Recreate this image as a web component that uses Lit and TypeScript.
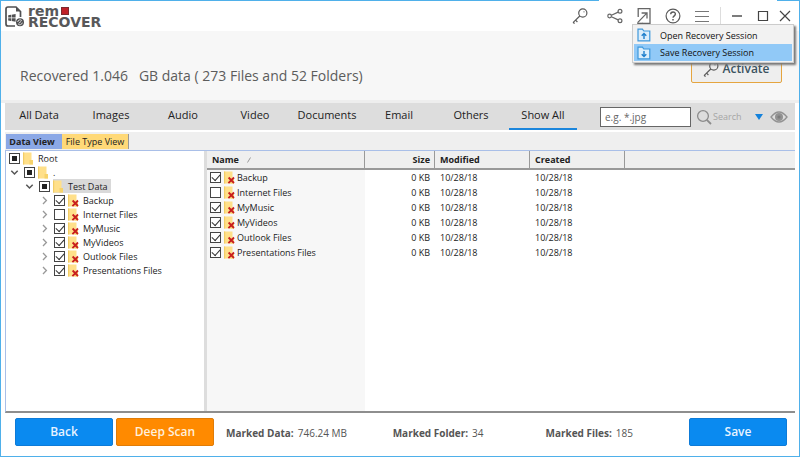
import { LitElement, html, css, svg, nothing } from "lit";
import { customElement, state } from "lit/decorators.js";
import { classMap } from "lit/directives/class-map.js";

interface Entry {
  name: string;
  checked: boolean;
}

const filters = ["All Data", "Images", "Audio", "Video", "Documents", "Email", "Others", "Show All"];

const entries: Entry[] = [
  { name: "Backup", checked: true },
  { name: "Internet Files", checked: false },
  { name: "MyMusic", checked: true },
  { name: "MyVideos", checked: true },
  { name: "Outlook Files", checked: true },
  { name: "Presentations Files", checked: true },
];

const stats = [
  { label: "Marked Data:", value: "746.24 MB" },
  { label: "Marked Folder:", value: "34" },
  { label: "Marked Files:", value: "185" },
];

const folder = (deleted = false) => html`<svg class="folder" width="11" height="13" viewBox="0 0 11 13" aria-hidden="true">
  <path d="M0 0.5H8.5V8H10V12.5H0z" fill="#ffe08a" />
  <path d="M0 0.5H1.2V12.5H0z" fill="#f2cd66" />
  <path d="M6.5 8H10V12.5H6.5z" fill="#f7d36a" />
  ${deleted ? svg`<path d="M4.6 6.5 10 12M10 6.5 4.4 12.2" stroke="#c81e1e" stroke-width="1.8" fill="none" />` : nothing}
</svg>`;

const chevron = (open: boolean) => html`<svg class="chevron" width="9" height="9" viewBox="0 0 9 9" fill="none" aria-hidden="true">
  ${open
    ? svg`<path d="M1.3 2.8 4.5 6 7.7 2.8" stroke="#555" stroke-width="1.5" />`
    : svg`<path d="M3 1 6.4 4.5 3 8" stroke="#999" stroke-width="1.3" />`}
</svg>`;

const keyIcon = html`<svg width="16" height="16" viewBox="0 0 16 16" fill="none" stroke="#5a5a5a" stroke-width="1.2" aria-hidden="true">
  <circle cx="10.8" cy="5" r="4.1" />
  <path d="M7.8 8 1 14.6M3.6 12.2 5.4 14M1.2 14.4 2.6 15.4" />
  <circle cx="12" cy="3.8" r="0.6" fill="#555" stroke="none" />
</svg>`;

const shareIcon = html`<svg width="16" height="16" viewBox="0 0 16 16" fill="none" stroke="#666" stroke-width="1.2" aria-hidden="true">
  <circle cx="2.6" cy="8" r="1.8" /><circle cx="13" cy="3.2" r="1.9" /><circle cx="13" cy="12.8" r="1.9" />
  <path d="M4.4 7.2 11.2 4.1M4.4 8.8 11.2 11.9" />
</svg>`;

const exportIcon = html`<svg width="16" height="18" viewBox="0 0 16 18" fill="none" stroke="#666" aria-hidden="true">
  <path d="M2.2 10V1.6H14V16.4H6.5" stroke-width="1.3" />
  <path d="M1.6 15.6 10.6 6.4M5.6 6H11V11.4" stroke-width="1.3" />
  <path d="M1.2 16.4H7" stroke-width="1.4" />
</svg>`;

const helpIcon = html`<svg width="16" height="16" viewBox="0 0 16 16" fill="none" stroke="#5a5a5a" stroke-width="1.2" aria-hidden="true">
  <circle cx="8" cy="8" r="6.9" />
  <path d="M5.7 6.2C5.7 3.2 10.4 3.2 10.4 6.1 10.4 7.8 8 7.9 8 9.8" stroke-width="1.4" />
  <path d="M8 11.1V12.6" stroke-width="1.5" />
</svg>`;

const menuIcon = html`<svg width="16" height="16" viewBox="0 0 16 16" stroke="#777" stroke-width="1.2" aria-hidden="true">
  <path d="M1 3.5H15M1 8.5H15M1 13.5H15" />
</svg>`;

const sessionIcon = (up: boolean) => html`<svg width="14" height="14" viewBox="0 0 14 14" fill="none" stroke="#3e98dc" stroke-width="1.2" aria-hidden="true">
  <path d="M1 12.8V1.2H5.4L6.8 3H12.8V12.8Z" fill="#dceefb" />
  ${up
    ? svg`<path d="M7 11V5.6M4.7 7.8 7 5.5 9.3 7.8" stroke="#1f7fcc" stroke-width="1.4" />`
    : svg`<path d="M7 5V10.4M4.7 8.2 7 10.5 9.3 8.2" stroke="#1f7fcc" stroke-width="1.4" />`}
</svg>`;

@customElement("app-root")
export class AppRoot extends LitElement {
  @state() private filter = "Show All";
  @state() private view = "Data View";

  static styles = css`
    :host {
      display: block;
      font-family: "Open Sans", "Noto Sans", sans-serif;
      font-size: 9px;
      color: #222;
    }
    * {
      box-sizing: border-box;
    }
    button {
      font: inherit;
      color: inherit;
      background: none;
      border: 0;
      padding: 0;
      cursor: pointer;
    }
    svg {
      display: block;
      flex: none;
    }
    .window {
      position: relative;
      display: flex;
      flex-direction: column;
      min-height: 100vh;
      border: 1px solid #4fb0ea;
      background: #fff;
    }
    .window::before {
      content: "";
      position: absolute;
      top: -1px;
      right: 22px;
      width: 178px;
      height: 1px;
      background: #fff;
    }
    .titlebar {
      display: flex;
      align-items: center;
      justify-content: space-between;
      height: 30px;
      padding: 0 2px 0 4px;
    }
    .brand {
      display: flex;
      align-items: center;
      gap: 3px;
      padding-top: 2px;
    }
    .wordmark {
      display: grid;
      font: bold 14px/11px "DejaVu Sans", sans-serif;
      color: #58585a;
    }
    .first {
      display: flex;
      align-items: center;
      gap: 2px;
    }
    .tools {
      display: flex;
      align-items: center;
    }
    .tools button {
      display: grid;
      place-items: center;
      width: 29px;
      height: 24px;
    }
    .tools .key {
      width: 41px;
    }
    .divider {
      width: 1px;
      height: 18px;
      margin-left: 4px;
      background: #ddd;
    }
    .tools .min {
      width: 32px;
    }
    .tools .max {
      width: 20px;
    }
    .tools .close {
      width: 24px;
    }
    .summary {
      display: flex;
      align-items: center;
      justify-content: space-between;
      height: 69px;
      padding: 0 17px 0 19px;
      background: #f7f7f7;
      color: #5c5c5c;
    }
    .summary h1 {
      margin: 0;
      padding-top: 20px;
      font-size: 14px;
      line-height: 20px;
      font-weight: 400;
      white-space: pre;
    }
    .activate {
      display: flex;
      align-items: center;
      justify-content: center;
      gap: 3px;
      width: 91px;
      height: 28px;
      margin-top: 6px;
      border: 1px solid #e5a53f;
      border-radius: 2px;
      background: #eee;
      color: #3b5360;
      font-size: 12px;
      font-weight: 600;
    }
    .session {
      position: absolute;
      top: 23px;
      right: 5px;
      width: 162px;
      margin: 0;
      padding: 1px;
      list-style: none;
      background: #f2f2f2;
      border: 1px solid #ccc;
      box-shadow: 2px 2px 2px #777;
    }
    .session button {
      display: flex;
      align-items: center;
      gap: 9px;
      width: 100%;
      height: 18px;
      padding-left: 3px;
      color: #111;
    }
    .session .hot {
      height: 17px;
      background: #91c9f7;
    }
    .filters {
      display: flex;
      align-items: center;
      height: 27px;
      margin: 0 4px;
      background: #ddd;
    }
    .strip {
      height: 3px;
      background: #eee;
    }
    .filters nav {
      flex: 1;
      display: grid;
      grid-template-columns: repeat(8, 1fr);
      gap: 4px;
      margin-right: 23px;
    }
    .filters nav button {
      height: 27px;
      padding-bottom: 2px;
      font-size: 11px;
      border-bottom: 2px solid transparent;
      white-space: nowrap;
    }
    .filters nav .on {
      border-color: #1c86dc;
    }
    .mask {
      width: 91px;
      height: 20px;
      padding: 0 4px;
      border: 1px solid #666;
      border-radius: 0;
      background: #fff;
      font: inherit;
      font-size: 10px;
      outline: 0;
    }
    .mask::placeholder {
      color: #666;
    }
    .search {
      display: flex;
      align-items: center;
      gap: 1px;
      width: 52px;
      margin-left: 5px;
      color: #a5a5a5;
    }
    .drop {
      margin: 0 7px;
    }
    .eye {
      margin-right: 7px;
    }
    .tabs {
      display: flex;
      align-items: flex-end;
      height: 18px;
      margin: 2px 4px 0;
      padding: 0 1px 1px;
      background: #efefef;
    }
    .tabs button {
      height: 15px;
      line-height: 14px;
      background: #ffd978;
      border-right: 1px solid #999;
    }
    .tabs .data {
      width: 56px;
      padding-right: 4px;
      background: #8ba8e6;
      font-weight: 700;
      border-right: 0;
    }
    .tabs .type {
      width: 67px;
    }
    .panes {
      flex: 1;
      display: flex;
      margin: 0 4px;
      border: solid #a9bfe8;
      border-width: 1px 0 0 1px;
      border-bottom: 2px solid #8e8e8e;
    }
    .tree {
      width: 198px;
    }
    .tree ul {
      margin: 0;
      padding: 0;
      list-style: none;
    }
    .tree ul ul {
      padding-left: 15px;
    }
    .node {
      display: flex;
      align-items: center;
      height: 14px;
      padding-left: 3px;
    }
    .deep {
      margin-left: -14px;
    }
    .node .chevron {
      margin-right: 5px;
    }
    .node label {
      display: flex;
      align-items: center;
      height: 14px;
      margin-left: 3px;
      padding-right: 3px;
      gap: 4px;
      white-space: nowrap;
    }
    .picked {
      background: #d9d9d9;
    }
    input[type="checkbox"] {
      appearance: none;
      flex: none;
      display: grid;
      place-items: center;
      width: 11px;
      height: 11px;
      margin: 0;
      border: 1px solid #444;
      background: #fff;
    }
    input[type="checkbox"]:indeterminate::before {
      content: "";
      width: 5px;
      height: 5px;
      background: #222;
    }
    input[type="checkbox"]:checked::before {
      content: "";
      width: 7px;
      height: 4px;
      margin-bottom: 2px;
      border: solid #333;
      border-width: 0 0 1px 1px;
      transform: rotate(-48deg);
    }
    .list {
      flex: 1;
      border-left: 3px solid #ddd;
      background: linear-gradient(to right, #f7f7f7 158px, #fff 158px);
    }
    table {
      width: 100%;
      table-layout: fixed;
      border-collapse: separate;
      border-spacing: 0;
    }
    th {
      height: 19px;
      padding: 0 6px 0 5px;
      text-align: left;
      font-weight: 700;
      background: #efefef;
      border-right: 1px solid #999;
      border-bottom: 2px solid #999;
    }
    th:last-child {
      border-right: 0;
    }
    td {
      height: 15px;
      padding: 0 6px 0 5px;
      line-height: 13px;
    }
    .name {
      width: 158px;
    }
    .size {
      width: 70px;
      text-align: right;
      padding-right: 4px;
    }
    td.size {
      padding-right: 5px;
    }
    .date {
      width: 95px;
    }
    th.name > span,
    td label {
      display: flex;
      align-items: center;
      gap: 3px;
      white-space: nowrap;
    }
    th.name > span {
      gap: 8px;
    }
    td.name {
      padding-left: 3px;
    }
    td .folder {
      margin-right: -1px;
    }
    .footer {
      display: flex;
      align-items: center;
      height: 43px;
      padding: 0 12px 6px 14px;
      color: #555;
      font-size: 10px;
    }
    .footer button {
      width: 98px;
      height: 28px;
      border: 1px solid #0d7bd8;
      border-radius: 2px;
      background: #0a8af0;
      color: #e8f3ff;
      font-size: 12px;
      font-weight: 600;
    }
    .footer .scan {
      margin-left: 3px;
      background: #ff8a00;
      border-color: #e07c08;
      color: #fff0dc;
    }
    .stats {
      flex: 1;
      display: grid;
      grid-template-columns: 36% 33% 31%;
      margin: 2px 0 0 12px;
    }
    .stats div {
      display: flex;
      gap: 4px;
      white-space: nowrap;
    }
    .stats dt {
      font-weight: 700;
    }
    .stats dd {
      margin: 0;
    }
  `;

  private leaf(e: Entry, i: number) {
    return html`<li class="node deep">
      ${chevron(false)}<input type="checkbox" id="t${i}" .checked=${e.checked} />
      <label for="t${i}">${folder(true)}${e.name}</label>
    </li>`;
  }

  render() {
    return html`<div class="window">
      <header class="titlebar">
        <div class="brand">
          <svg width="20" height="22" viewBox="0 0 20 22" fill="none" aria-hidden="true">
            <path d="M10 20H3Q1 20 1 18V3Q1 1 3 1H11L15.5 5.5V11" stroke="#505052" stroke-width="1.7" />
            <path d="M11 1V5.5H15.5z" fill="#505052" />
            <path d="M3.2 9.2 6 8.8V11.6H3.2zM6.6 8.7 10.6 8V11.6H6.6zM3.2 12.2H6V15L3.2 14.6zM6.6 12.2H10.6V15.8L6.6 15.1z" fill="#505052" />
            <circle cx="15" cy="16.3" r="4" fill="#505052" />
            <path d="M12.7 16A2.4 2.4 0 0 1 16.8 14.6M17.3 16.6A2.4 2.4 0 0 1 13.2 18M13.8 17.3 16.2 15.3" stroke="#fff" stroke-width="0.8" />
          </svg>
          <div class="wordmark">
            <span class="first">rem<svg width="8" height="9" viewBox="0 0 8 9" role="img" aria-label="o"><path d="M0 0H8V8H0z" fill="#7c2a2e" /><path d="M1 1H7V7H1z" fill="#bf2027" /></svg></span>
            <span>RECOVER</span>
          </div>
        </div>
        <div class="tools">
          <button class="key" aria-label="Activate">${keyIcon}</button>
          <button aria-label="Share">${shareIcon}</button>
          <button aria-label="Recovery session">${exportIcon}</button>
          <button aria-label="Help">${helpIcon}</button>
          <button aria-label="Menu">${menuIcon}</button>
          <span class="divider"></span>
          <button class="min" aria-label="Minimize"><svg width="12" height="12" viewBox="0 0 12 12"><path d="M1 6H11" stroke="#444" stroke-width="1.4" /></svg></button>
          <button class="max" aria-label="Maximize"><svg width="12" height="12" viewBox="0 0 12 12"><path d="M1.5 1.5H10.5V10.5H1.5z" fill="none" stroke="#444" stroke-width="1.2" /></svg></button>
          <button class="close" aria-label="Close"><svg width="12" height="12" viewBox="0 0 12 12"><path d="M1 1 11 11M11 1 1 11" stroke="#444" stroke-width="1.2" /></svg></button>
        </div>
      </header>
      <section class="summary">
        <h1>Recovered 1.046   GB data ( 273 Files and 52 Folders)</h1>
        <button class="activate">${keyIcon}Activate</button>
      </section>
      <ul class="session">
        <li><button>${sessionIcon(true)}Open Recovery Session</button></li>
        <li><button class="hot">${sessionIcon(false)}Save Recovery Session</button></li>
      </ul>
      <div class="strip"></div>
      <div class="filters">
        <nav>
          ${filters.map((f) => html`<button class=${classMap({ on: f === this.filter })} @click=${() => (this.filter = f)}>${f}</button>`)}
        </nav>
        <input class="mask" type="text" placeholder="e.g. *.jpg" aria-label="File mask" />
        <button class="search">
          <svg width="16" height="16" viewBox="0 0 16 16" fill="none" stroke="#8c8c8c" stroke-width="1.3" aria-hidden="true"><circle cx="7" cy="7" r="5.4" /><path d="M10.8 10.8 15 15" stroke-width="1.8" /></svg>Search
        </button>
        <button class="drop" aria-label="Search options"><svg width="8" height="6" viewBox="0 0 8 6"><path d="M0 0H8L4 6z" fill="#1482dc" /></svg></button>
        <button class="eye" aria-label="Preview">
          <svg width="18" height="12" viewBox="0 0 18 12" fill="none"><path d="M1 6Q9 -4 17 6 9 16 1 6z" stroke="#929292" stroke-width="1.3" /><circle cx="9" cy="6" r="4" fill="#929292" /><circle cx="9" cy="6" r="1.6" fill="#7c7c7c" /></svg>
        </button>
      </div>
      <div class="tabs">
        <button class="data" @click=${() => (this.view = "Data View")}>Data View</button>
        <button class="type" @click=${() => (this.view = "File Type View")}>File Type View</button>
      </div>
      <main class="panes">
        <div class="tree">
          <ul>
            <li>
              <div class="node"><input type="checkbox" id="root" .indeterminate=${true} /><label for="root">${folder()}Root</label></div>
              <ul>
                <li>
                  <div class="node deep">${chevron(true)}<input type="checkbox" id="dot" .indeterminate=${true} /><label for="dot">${folder()}.</label></div>
                  <ul>
                    <li>
                      <div class="node deep">${chevron(true)}<input type="checkbox" id="test" .indeterminate=${true} /><label class="picked" for="test">${folder()}Test Data</label></div>
                      <ul>${entries.map((e, i) => this.leaf(e, i))}</ul>
                    </li>
                  </ul>
                </li>
              </ul>
            </li>
          </ul>
        </div>
        <div class="list">
          <table>
            <thead>
              <tr>
                <th class="name"><span>Name<svg width="6" height="6" viewBox="0 0 6 6"><path d="M0.5 5.5 3.5 0.5" stroke="#999" /></svg></span></th>
                <th class="size">Size</th>
                <th class="date">Modified</th>
                <th class="date">Created</th>
                <th></th>
              </tr>
            </thead>
            <tbody>
              ${entries.map((e) => html`<tr>
                <td class="name"><label><input type="checkbox" .checked=${e.checked} />${folder(true)}${e.name}</label></td>
                <td class="size">0 KB</td>
                <td class="date">10/28/18</td>
                <td class="date">10/28/18</td>
                <td></td>
              </tr>`)}
            </tbody>
          </table>
        </div>
      </main>
      <footer class="footer">
        <button>Back</button>
        <button class="scan">Deep Scan</button>
        <dl class="stats">${stats.map((s) => html`<div><dt>${s.label}</dt><dd>${s.value}</dd></div>`)}</dl>
        <button>Save</button>
      </footer>
    </div>`;
  }
}
